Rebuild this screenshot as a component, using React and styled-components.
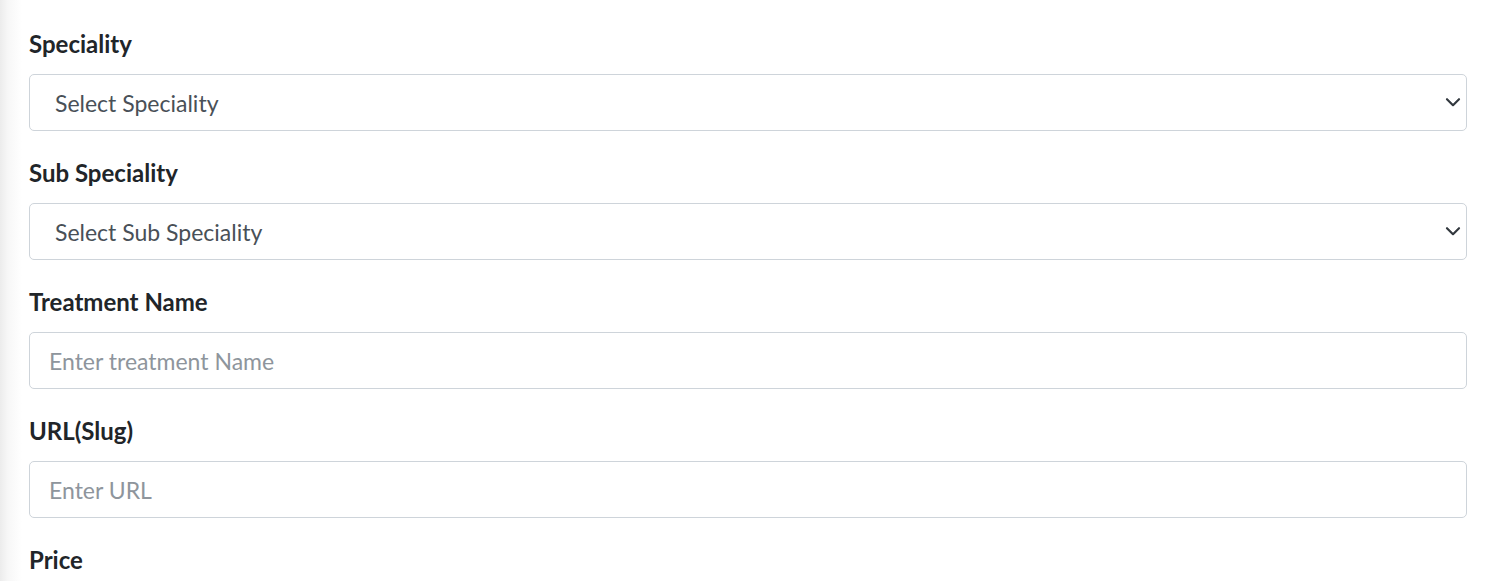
import React from "react";
import styled, { createGlobalStyle } from "styled-components";

const GlobalStyle = createGlobalStyle`
  html, body {
    margin: 0;
    padding: 0;
    background: #fff;
  }
  body {
    font-family: Lato, "Noto Sans", sans-serif;
  }
`;

const Page = styled.main`
  min-height: 581px;
  box-sizing: border-box;
  padding: 29px 30px 0 29px;
  background: linear-gradient(to right, #ececec 0px, #f7f7f7 8px, #fff 22px);
`;

const Group = styled.div`
  margin-bottom: 27px;
`;

const Label = styled.label`
  display: block;
  font-size: 24px;
  font-weight: 700;
  line-height: 30px;
  color: #212529;
  margin-bottom: 15px;
`;

const SelectWrap = styled.div`
  position: relative;
`;

const fieldBase = `
  display: block;
  width: 100%;
  height: 57px;
  box-sizing: border-box;
  border: 1px solid #ced4da;
  border-radius: 5px;
  background: #fff;
  font-family: Lato, "Noto Sans", sans-serif;
  font-size: 23px;
  outline: none;
`;

const Select = styled.select`
  ${fieldBase}
  appearance: none;
  padding: 0 40px 0 25px;
  color: #495057;
`;

const Chevron = styled.svg`
  position: absolute;
  right: 6px;
  top: 50%;
  width: 16px;
  height: 16px;
  transform: translateY(-55%);
  pointer-events: none;
`;

const Input = styled.input`
  ${fieldBase}
  padding: 0 19px;
  color: #495057;
  &::placeholder {
    color: #8e959c;
  }
`;

function SelectField({ label, placeholder }) {
  return (
    <Group>
      <Label>{label}</Label>
      <SelectWrap>
        <Select defaultValue="">
          <option value="">{placeholder}</option>
        </Select>
        <Chevron viewBox="0 0 16 16">
          <path
            d="M2 5l6 6 6-6"
            fill="none"
            stroke="#343a40"
            strokeWidth="2.2"
            strokeLinecap="round"
            strokeLinejoin="round"
          />
        </Chevron>
      </SelectWrap>
    </Group>
  );
}

function TextField({ label, placeholder }) {
  return (
    <Group>
      <Label>{label}</Label>
      <Input type="text" placeholder={placeholder} />
    </Group>
  );
}

export default function App() {
  return (
    <>
      <GlobalStyle />
      <Page>
        <SelectField label="Speciality" placeholder="Select Speciality" />
        <SelectField label="Sub Speciality" placeholder="Select Sub Speciality" />
        <TextField label="Treatment Name" placeholder="Enter treatment Name" />
        <TextField label="URL(Slug)" placeholder="Enter URL" />
        <Group>
          <Label>Price</Label>
        </Group>
      </Page>
    </>
  );
}
